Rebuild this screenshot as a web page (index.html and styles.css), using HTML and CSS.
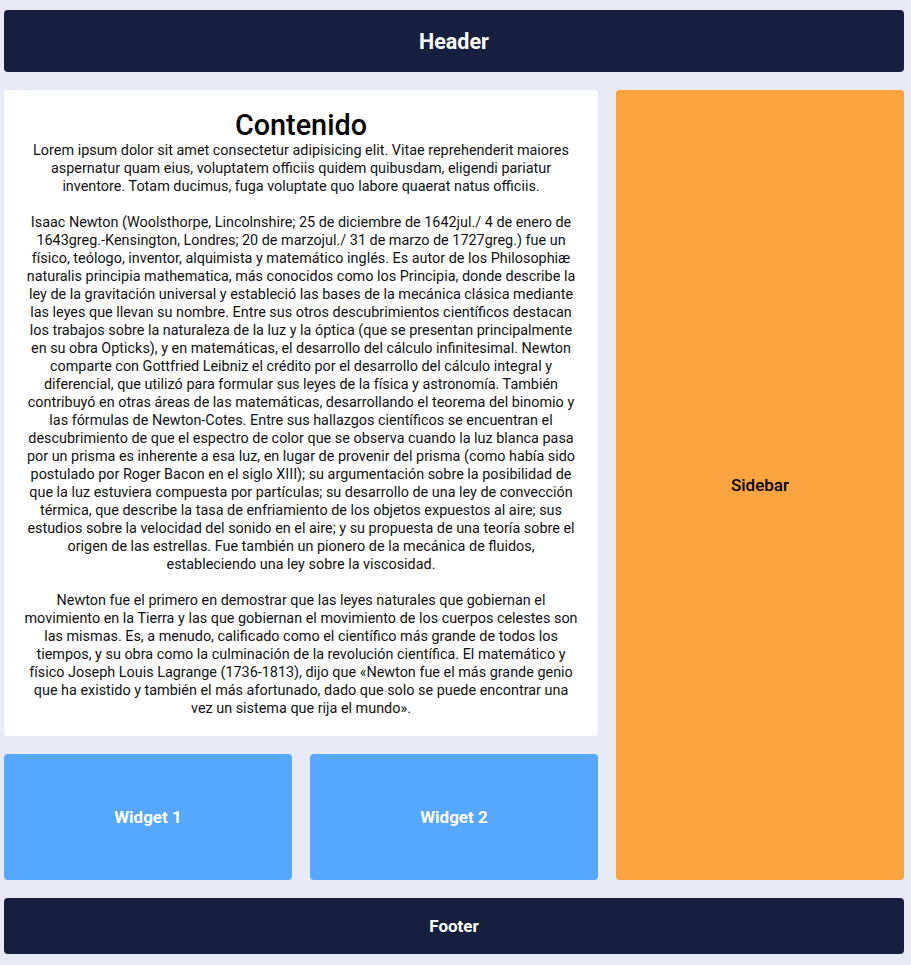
FILE: index.html
```html
<!DOCTYPE html>
<html lang="es">
<head>
<meta charset="utf-8">
<title>Layout</title>
<link rel="stylesheet" href="styles.css">
</head>
<body>
<div class="layout">
  <header class="header">Header</header>
  <main class="content">
    <h1 class="title">Contenido</h1>
    <p>Lorem ipsum dolor sit amet consectetur adipisicing elit. Vitae reprehenderit maiores aspernatur quam eius, voluptatem officiis quidem quibusdam, eligendi pariatur inventore. Totam ducimus, fuga voluptate quo labore quaerat natus officiis.</p>
    <p>Isaac Newton (Woolsthorpe, Lincolnshire; 25 de diciembre de 1642jul./ 4 de enero de 1643greg.-Kensington, Londres; 20 de marzojul./ 31 de marzo de 1727greg.) fue un físico, teólogo, inventor, alquimista y matemático inglés. Es autor de los Philosophiæ naturalis principia mathematica, más conocidos como los Principia, donde describe la ley de la gravitación universal y estableció las bases de la mecánica clásica mediante las leyes que llevan su nombre. Entre sus otros descubrimientos científicos destacan los trabajos sobre la naturaleza de la luz y la óptica (que se presentan principalmente en su obra Opticks), y en matemáticas, el desarrollo del cálculo infinitesimal. Newton comparte con Gottfried Leibniz el crédito por el desarrollo del cálculo integral y diferencial, que utilizó para formular sus leyes de la física y astronomía. También contribuyó en otras áreas de las matemáticas, desarrollando el teorema del binomio y las fórmulas de Newton-Cotes. Entre sus hallazgos científicos se encuentran el descubrimiento de que el espectro de color que se observa cuando la luz blanca pasa por un prisma es inherente a esa luz, en lugar de provenir del prisma (como había sido postulado por Roger Bacon en el siglo XIII); su argumentación sobre la posibilidad de que la luz estuviera compuesta por partículas; su desarrollo de una ley de convección térmica, que describe la tasa de enfriamiento de los objetos expuestos al aire; sus estudios sobre la velocidad del sonido en el aire; y su propuesta de una teoría sobre el origen de las estrellas. Fue también un pionero de la mecánica de fluidos, estableciendo una ley sobre la viscosidad.</p>
    <p>Newton fue el primero en demostrar que las leyes naturales que gobiernan el movimiento en la Tierra y las que gobiernan el movimiento de los cuerpos celestes son las mismas. Es, a menudo, calificado como el científico más grande de todos los tiempos, y su obra como la culminación de la revolución científica. El matemático y físico Joseph Louis Lagrange (1736-1813), dijo que «Newton fue el más grande genio que ha existido y también el más afortunado, dado que solo se puede encontrar una vez un sistema que rija el mundo».</p>
  </main>
  <aside class="sidebar">Sidebar</aside>
  <section class="widget">Widget 1</section>
  <section class="widget">Widget 2</section>
  <footer class="footer">Footer</footer>
</div>
</body>
</html>
```
FILE: styles.css
```css
html, body {
  margin: 0;
  padding: 0;
  background: #e8ebf5;
  font-family: Roboto, "Liberation Sans", sans-serif;
}

.layout {
  width: 900px;
  margin: 10px 0 0 4px;
  display: grid;
  grid-template-columns: 288px 288px 288px;
  grid-template-rows: 62px auto 126px 56px;
  gap: 18px;
  grid-template-areas:
    "header header header"
    "content content sidebar"
    "w1 w2 sidebar"
    "footer footer footer";
}

.header, .footer {
  background: #14203d;
  color: #ffffff;
  border-radius: 4px;
  display: flex;
  align-items: center;
  justify-content: center;
  font-weight: 700;
}

.header {
  grid-area: header;
  font-size: 21.5px;
}

.footer {
  grid-area: footer;
  font-size: 17px;
}

.content {
  grid-area: content;
  background: #ffffff;
  border-radius: 4px;
  padding: 18px;
  text-align: center;
  color: #111111;
}

.title {
  margin: 0;
  font-size: 28.8px;
  font-weight: 500;
  line-height: 34px;
  color: #000000;
}

.content p {
  margin: 18px 0 0;
  font-size: 14.4px;
  line-height: 18px;
}

.content p:first-of-type {
  margin-top: 0;
}

.sidebar {
  grid-area: sidebar;
  background: #f9a43f;
  border-radius: 4px;
  display: flex;
  align-items: center;
  justify-content: center;
  font-size: 17px;
  font-weight: 500;
  color: #000000;
}

.widget {
  background: #55a7ff;
  border-radius: 4px;
  color: #ffffff;
  display: flex;
  align-items: center;
  justify-content: center;
  font-size: 17px;
  font-weight: 700;
}
```
